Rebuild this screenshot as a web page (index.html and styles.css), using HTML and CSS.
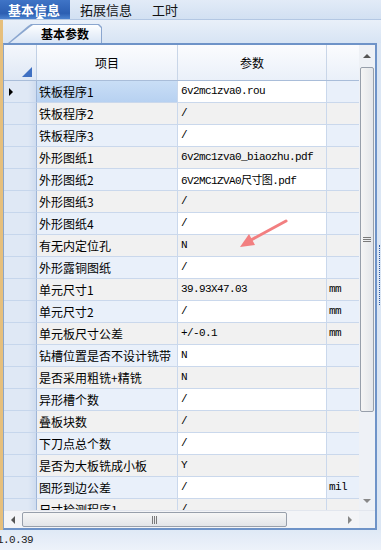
FILE: index.html
```html
<!DOCTYPE html>
<html lang="zh">
<head>
    <meta charset="UTF-8">
    <title>基本参数</title>
    <link rel="stylesheet" href="styles.css">
</head>
<body>
    <!-- top tabs -->
    <div class="tabs">
        <span class="tab active">基本信息</span>
        <span class="tab">拓展信息</span>
        <span class="tab">工时</span>
    </div>
    <div class="subtabs">
        <span class="subtab"><span class="label">基本参数</span></span>
    </div>

    <div class="main">
        <div class="side"></div>
        <div class="frame">
            <div class="upper">
                <div class="grid">
                    <div class="head">
                        <div class="corner"><span class="tri"></span></div>
                        <div class="hcell item">项目</div>
                        <div class="hcell param">参数</div>
                        <div class="hcell unit"></div>
                    </div>
                    <div class="rows">
                        <div class="row current"><div class="rh"><span class="ptr"></span></div><div class="c item">铁板程序1</div><div class="c param">6v2mc1zva0.rou</div><div class="c unit"></div></div>
                        <div class="row alt"><div class="rh"></div><div class="c item">铁板程序2</div><div class="c param">/</div><div class="c unit"></div></div>
                        <div class="row"><div class="rh"></div><div class="c item">铁板程序3</div><div class="c param">/</div><div class="c unit"></div></div>
                        <div class="row alt"><div class="rh"></div><div class="c item">外形图纸1</div><div class="c param">6v2mc1zva0_biaozhu.pdf</div><div class="c unit"></div></div>
                        <div class="row"><div class="rh"></div><div class="c item">外形图纸2</div><div class="c param">6V2MC1ZVA0尺寸图.pdf</div><div class="c unit"></div></div>
                        <div class="row alt"><div class="rh"></div><div class="c item">外形图纸3</div><div class="c param">/</div><div class="c unit"></div></div>
                        <div class="row"><div class="rh"></div><div class="c item">外形图纸4</div><div class="c param">/</div><div class="c unit"></div></div>
                        <div class="row alt"><div class="rh"></div><div class="c item">有无内定位孔</div><div class="c param">N</div><div class="c unit"></div></div>
                        <div class="row"><div class="rh"></div><div class="c item">外形露铜图纸</div><div class="c param">/</div><div class="c unit"></div></div>
                        <div class="row alt"><div class="rh"></div><div class="c item">单元尺寸1</div><div class="c param">39.93X47.03</div><div class="c unit">mm</div></div>
                        <div class="row"><div class="rh"></div><div class="c item">单元尺寸2</div><div class="c param">/</div><div class="c unit">mm</div></div>
                        <div class="row alt"><div class="rh"></div><div class="c item">单元板尺寸公差</div><div class="c param">+/-0.1</div><div class="c unit">mm</div></div>
                        <div class="row"><div class="rh"></div><div class="c item">钻槽位置是否不设计铣带</div><div class="c param">N</div><div class="c unit"></div></div>
                        <div class="row alt"><div class="rh"></div><div class="c item">是否采用粗铣+精铣</div><div class="c param">N</div><div class="c unit"></div></div>
                        <div class="row"><div class="rh"></div><div class="c item">异形槽个数</div><div class="c param">/</div><div class="c unit"></div></div>
                        <div class="row alt"><div class="rh"></div><div class="c item">叠板块数</div><div class="c param">/</div><div class="c unit"></div></div>
                        <div class="row"><div class="rh"></div><div class="c item">下刀点总个数</div><div class="c param">/</div><div class="c unit"></div></div>
                        <div class="row alt"><div class="rh"></div><div class="c item">是否为大板铣成小板</div><div class="c param">Y</div><div class="c unit"></div></div>
                        <div class="row"><div class="rh"></div><div class="c item">图形到边公差</div><div class="c param">/</div><div class="c unit">mil</div></div>
                        <div class="row alt"><div class="rh"></div><div class="c item">尺寸检测程序1</div><div class="c param">/</div><div class="c unit"></div></div>
                    </div>
                </div>
                <div class="vscroll">
                    <div class="sbtn"><span class="arr up"></span></div>
                    <div class="vthumb"><span class="grip"></span></div>
                    <div class="fill"></div>
                    <div class="sbtn low"><span class="arr down"></span></div>
                </div>
            </div>
            <div class="hscroll">
                <div class="hbtn"><span class="arr left"></span></div>
                <div class="hthumb"><span class="grip h"></span></div>
                <div class="fill"></div>
                <div class="hbtn"><span class="arr right"></span></div>
                <div class="sizer"></div>
            </div>
        </div>
        <div class="splitter"><span class="dots"></span></div>
    </div>

    <div class="status">1.0.39</div>

    <!-- red annotation arrow -->
    <svg class="mark" width="381" height="550" viewBox="0 0 381 550">
        <line x1="286" y1="221" x2="251" y2="240" stroke="#f27f80" stroke-width="3" stroke-linecap="round"/>
        <polygon points="240,247 255,245 249,234" fill="#f27f80"/>
    </svg>
</body>
</html>
```

FILE: styles.css
```css
body {
    margin: 0;
    width: 381px;
    height: 550px;
    overflow: hidden;
    position: relative;
    background: #dde8f5;
    font-family: "Noto Sans CJK SC", "Liberation Sans", sans-serif;
    font-size: 12px;
    color: #000;
}
.tabs {
    height: 19px;
    display: flex;
    border-bottom: 1px solid #b3c7e3;
    background: linear-gradient(#e2ebf7, #d2e0f2);
}
.tab {
    display: flex;
    align-items: center;
    padding: 0 10px;
    font-size: 13px;
    line-height: 1;
    color: #111;
}
.tab.active {
    position: relative;
    padding: 0 10px 0 8px;
    color: #fff;
    font-weight: bold;
    background: linear-gradient(#3f74c6, #2c5fb2 70%, #4b83d0);
}
/* little white pointer under the selected tab */
.tab.active::after {
    content: "";
    position: absolute;
    left: 36px;
    bottom: 0;
    border-left: 4px solid transparent;
    border-right: 4px solid transparent;
    border-bottom: 4px solid #fff;
}
.subtabs {
    height: 23px;
    display: flex;
    align-items: flex-end;
    padding-left: 5px;
    border-left: 3px solid #e6bf7c;
    box-sizing: border-box;
    background: linear-gradient(#e9f0f9, #d7e4f4);
}
/* slanted tab: outer shape is the border, inner shape the fill */
.subtab {
    position: relative;
    height: 19px;
    width: 94px;
    display: flex;
    align-items: center;
    justify-content: center;
    padding-left: 20px;
    box-sizing: border-box;
    font-weight: bold;
    font-size: 12px;
}
.subtab::before,
.subtab::after {
    content: "";
    position: absolute;
    top: 0;
    bottom: 0;
    left: 0;
    right: 0;
    clip-path: polygon(0 100%, 20px 2px, 23px 0, calc(100% - 3px) 0, 100% 3px, 100% 100%);
}
.subtab::before {
    background: #8aa6cf;
}
.subtab::after {
    top: 1px;
    left: 2px;
    right: 1px;
    background: linear-gradient(#fdfeff, #d9e5f5);
}
.subtab .label {
    position: relative;
    z-index: 1;
}
.main {
    display: flex;
    height: 487px;
}
.side {
    width: 3px;
    background: #e6bf7c;
}
.frame {
    width: 371px;
    border-top: 2px solid #6e93c8;
    border-left: 1px solid #8ba5c8;
    border-right: 2px solid #6e93c8;
    border-bottom: 2px solid #6e93c8;
    display: flex;
    flex-direction: column;
    background: #fff;
}
.upper {
    display: flex;
    height: 465px;
}
.grid {
    width: 355px;
    display: flex;
    flex-direction: column;
}
.head {
    display: flex;
    height: 35px;
    border-bottom: 1px solid #a9bdd9;
    background: linear-gradient(#fbfcfe, #eaf0f9);
}
.corner {
    width: 33px;
    position: relative;
    border-right: 1px solid #c1d0e5;
    box-sizing: border-box;
    background: linear-gradient(#f4f7fc, #dfe8f5);
}
.corner .tri {
    position: absolute;
    right: 4px;
    bottom: 3px;
    border-left: 10px solid transparent;
    border-bottom: 10px solid #3f70c2;
}
.hcell {
    display: flex;
    align-items: center;
    justify-content: center;
    box-sizing: border-box;
    border-right: 1px solid #c9d6e8;
}
.item { width: 141px; }
.param { width: 149px; }
.unit { width: 32px; }
.hcell.unit { border-right: none; }
.rows {
    height: 430px;
    overflow: hidden;
}
.row {
    display: flex;
    height: 22px;
}
.rh {
    width: 33px;
    position: relative;
    box-sizing: border-box;
    border-bottom: 1px solid #c6d6ec;
    border-right: 1px solid #9fb6d8;
    background: linear-gradient(90deg, #dfe8f5 75%, #cfdcef);
}
.ptr {
    position: absolute;
    left: 5px;
    top: 7px;
    border-top: 4px solid transparent;
    border-bottom: 4px solid transparent;
    border-left: 4px solid #000;
}
.c {
    box-sizing: border-box;
    display: flex;
    align-items: center;
    border-bottom: 1px solid #cad8ec;
    border-right: 1px solid #cad8ec;
    white-space: nowrap;
    overflow: hidden;
}
.c.item {
    padding-left: 2px;
    background: #e9f0fa;
}
.c.param {
    padding-left: 3px;
    background: #fff;
    font-family: "Liberation Mono", "Noto Sans CJK SC", monospace;
    font-size: 11px;
    letter-spacing: -0.6px;
}
.c.unit {
    padding-left: 2px;
    background: #e9f0fa;
    font-family: "Liberation Mono", monospace;
    font-size: 11px;
    letter-spacing: -0.6px;
    border-right: none;
}
.row.alt .c {
    background: #f1f1f1;
}
.row.current .c.item {
    background: linear-gradient(#c9def6, #b7d1f1);
}
.vscroll {
    width: 16px;
    display: flex;
    flex-direction: column;
    background: #eef1f6;
}
.sbtn {
    height: 22px;
    display: flex;
    align-items: center;
    justify-content: center;
}
.sbtn.low {
    height: 18px;
}
.vthumb {
    height: 345px;
    margin: 0 1px;
    border: 1px solid #979fab;
    border-radius: 2px;
    box-sizing: border-box;
    background: linear-gradient(90deg, #f5f5f5, #e3e6ea);
    display: flex;
    align-items: center;
    justify-content: center;
}
.grip {
    width: 8px;
    height: 6px;
    background: repeating-linear-gradient(#7a7a7a 0 1px, transparent 1px 2px);
}
.grip.h {
    width: 6px;
    height: 8px;
    background: repeating-linear-gradient(90deg, #7a7a7a 0 1px, transparent 1px 2px);
}
.fill { flex: 1; }
.arr {
    width: 0;
    height: 0;
}
.arr.up {
    border-left: 4px solid transparent;
    border-right: 4px solid transparent;
    border-bottom: 4px solid #555;
}
.arr.down {
    border-left: 4px solid transparent;
    border-right: 4px solid transparent;
    border-top: 4px solid #888;
}
.arr.left {
    border-top: 4px solid transparent;
    border-bottom: 4px solid transparent;
    border-right: 4px solid #555;
}
.arr.right {
    border-top: 4px solid transparent;
    border-bottom: 4px solid transparent;
    border-left: 4px solid #888;
}
.hscroll {
    height: 18px;
    display: flex;
    background: #f3f4f7;
    border-top: 1px solid #e2e6ee;
    box-sizing: border-box;
}
.hbtn {
    width: 18px;
    display: flex;
    align-items: center;
    justify-content: center;
}
.hthumb {
    width: 265px;
    margin: 1px 0;
    border: 1px solid #979fab;
    border-radius: 2px;
    box-sizing: border-box;
    background: linear-gradient(#f6f6f6, #e2e5e9);
    display: flex;
    align-items: center;
    justify-content: center;
}
.sizer {
    width: 16px;
    background: #eef1f6;
}
.splitter {
    width: 4px;
    position: relative;
    background: #dbe6f4;
}
.dots {
    position: absolute;
    left: 2px;
    top: 202px;
    height: 60px;
    border-left: 1px dotted #2f5ca8;
}
.status {
    height: 20px;
    display: flex;
    align-items: center;
    margin-left: -3px;
    font-family: "Liberation Mono", monospace;
    font-size: 11px;
    letter-spacing: -0.6px;
    color: #222;
    background: linear-gradient(#dfe9f6, #edf2fa);
}
.mark {
    position: absolute;
    left: 0;
    top: 0;
    pointer-events: none;
}
```
